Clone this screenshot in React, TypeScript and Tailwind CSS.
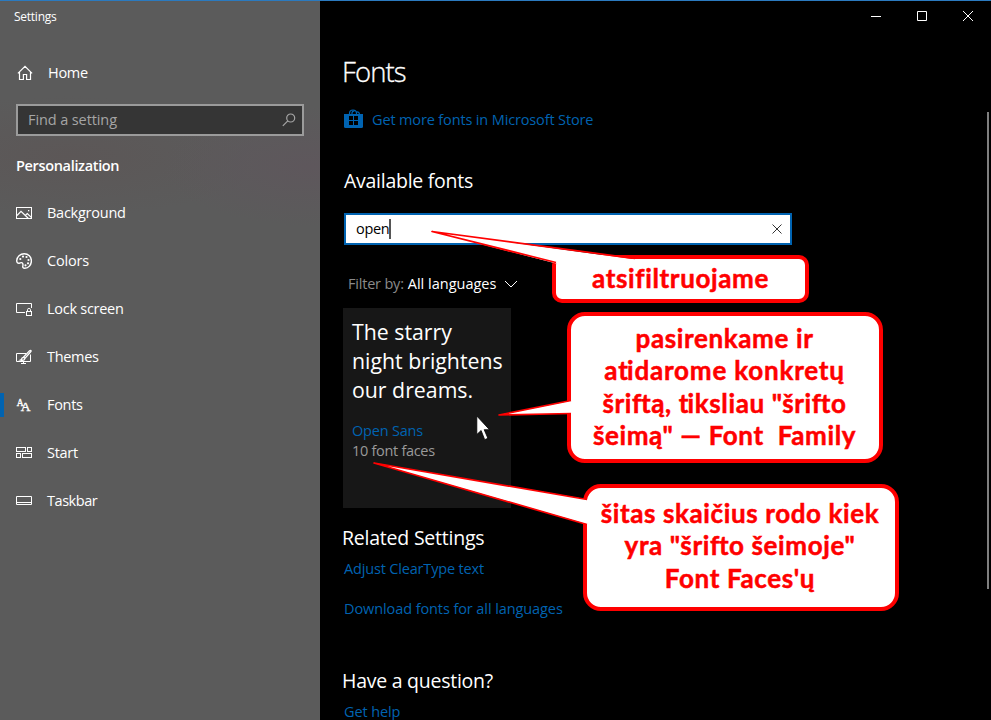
import type { ReactNode } from "react";

const stroke = { fill: "none", stroke: "currentColor", strokeWidth: 1 } as const;

function HomeIcon() {
  return (
    <svg width="16" height="16" viewBox="0 0 16 16" className="shrink-0">
      <path {...stroke} strokeWidth={1.2} d="M.9 8.4 8 1.3l7.1 7.1M2.5 7v7.5h3.9V9.5h3.2v5h3.9V7" />
    </svg>
  );
}

function PictureIcon() {
  return (
    <svg width="16" height="16" viewBox="0 0 16 16">
      <rect {...stroke} x=".5" y="2.5" width="15" height="11" />
      <path {...stroke} strokeWidth={1.2} d="m1 10.5 4-4.2 7.2 7M9.3 10.4l2-1.9 4 3.9" />
      <rect x="12" y="5" width="1.3" height="1.3" fill="currentColor" />
    </svg>
  );
}

function PaletteIcon() {
  return (
    <svg width="16" height="16" viewBox="0 0 16 16">
      <path {...stroke} strokeWidth={1.4} d="M.7 7.6C.9 3.6 4.2.7 8.2.7c4.1 0 7.2 3 7.2 7.1 0 4.200-3 7.500-6.600 7.500-1.700 0-2.300-1-2-2.300.3-1.500.3-2.700-.6-3.200-.9-.5-1.700.1-2.700.4C1.800 10.600.6 9.600.7 7.600Z" />
      <g fill="currentColor">
        <circle cx="4.300" cy="6" r="1.100" />
        <circle cx="7" cy="3.600" r="1.100" />
        <circle cx="10.500" cy="4" r="1.100" />
        <circle cx="12.500" cy="7" r="1.100" />
        <circle cx="12" cy="10.300" r="1.100" />
        <circle cx="9.500" cy="12.300" r="1.100" />
      </g>
    </svg>
  );
}

function LockScreenIcon() {
  return (
    <svg width="16" height="16" viewBox="0 0 16 16">
      <path {...stroke} d="M9 11.500H.5v-9h15V7" />
      <rect {...stroke} x="10.500" y="10.500" width="5" height="4" />
      <path {...stroke} d="M11.500 10.500V8.500q0-1 1.500-1t1.500 1v2" />
    </svg>
  );
}

function ThemesIcon() {
  return (
    <svg width="16" height="16" viewBox="0 0 16 16">
      <path {...stroke} d="M10 4.500H.5v8h14V5.500M7.500 12.500v2M5 14.500h5" />
      <path {...stroke} strokeWidth={1.300} d="m7.400 8.300 6-6.400q1-.9 1.500-.4t-.4 1.500L8.700 9.600M7.300 8.300q1.500.1 1.500 1.500-.5 2-4.300 1.200 1.100-.4 1.300-1.500.4-1.200 1.500-1.200Z" />
    </svg>
  );
}

function FontsIcon() {
  return (
    <svg width="16" height="16" viewBox="0 0 16 16" fill="currentColor" stroke="currentColor" strokeWidth=".35" className="font-['Liberation_Serif',serif]">
      <text x=".8" y="9.300" fontSize="9.500">A</text>
      <text x="4.800" y="13.500" fontSize="13.500">A</text>
    </svg>
  );
}

function StartIcon() {
  return (
    <svg width="16" height="16" viewBox="0 0 16 16" {...stroke}>
      <rect x=".5" y="2.500" width="9" height="4" />
      <rect x="11.500" y="2.500" width="4" height="4" />
      <rect x=".5" y="8.500" width="4" height="4" />
      <rect x="6.500" y="8.500" width="9" height="4" />
    </svg>
  );
}

function TaskbarIcon() {
  return (
    <svg width="16" height="16" viewBox="0 0 16 16" {...stroke}>
      <path d="M.5 3.500h15v8H.5zM.5 9.500h15" />
    </svg>
  );
}

function StoreIcon() {
  return (
    <svg width="19" height="20" viewBox="0 0 19 20" className="shrink-0 text-[#0063b1]">
      <path {...stroke} strokeWidth={1.200} d="M5.500 6V4.500Q5.500 1 9 1t3.500 3.500V6M8 5.500V4q0-2 2.500-2.200M12.500 3q3-.5 3 3" />
      <path fill="currentColor" d="M0 5h19v12.500q0 1.500-1.500 1.500h-16Q0 19 0 17.500z" />
      <path fill="#000" d="M5 7h4v4H5zM10 7h4v4h-4zM5 12h4v4H5zM10 12h4v4h-4z" />
    </svg>
  );
}

const items: { label: string; icon: ReactNode; track: string }[] = [
  { label: "Background", icon: <PictureIcon />, track: "tracking-[-0.25px]" },
  { label: "Colors", icon: <PaletteIcon />, track: "tracking-[-0.2px]" },
  { label: "Lock screen", icon: <LockScreenIcon />, track: "tracking-[-0.27px]" },
  { label: "Themes", icon: <ThemesIcon />, track: "tracking-[-0.3px]" },
  { label: "Fonts", icon: <FontsIcon />, track: "tracking-[-0.3px]" },
  { label: "Start", icon: <StartIcon />, track: "tracking-[-0.3px]" },
  { label: "Taskbar", icon: <TaskbarIcon />, track: "tracking-[-0.45px]" },
];

function Sidebar() {
  return (
    <aside className="flex w-[320px] shrink-0 flex-col bg-[#5b5b5b] bg-[radial-gradient(ellipse_150px_60px_at_310px_165px,#5e575c_0%,transparent_100%),radial-gradient(ellipse_200px_60px_at_70px_155px,#5c5757_0%,transparent_100%)] text-white">
      <div className="mt-[7px] h-[18px] pl-[14px] text-[12px] leading-[18px] tracking-[-0.25px]">Settings</div>
      <div className="mt-[37px] flex h-5 items-center gap-[15px] pl-[17px]">
        <HomeIcon />
        <span className="tracking-[-0.3px]">Home</span>
      </div>
      <div className="mx-4 mt-[21px] flex h-8 items-center justify-between border-2 border-[#9b9b9b] bg-[#353535] pr-[6px] pl-[10px] text-[#a5a5a5]">
        <span className="tracking-[-0.1px]">Find a setting</span>
        <svg width="14" height="14" viewBox="0 0 14 14">
          <circle {...stroke} strokeWidth={1.200} cx="8.700" cy="5" r="4" />
          <path {...stroke} strokeWidth={1.200} d="M5.800 7.800.8 12.800" />
        </svg>
      </div>
      <div className="mt-5 pl-4 font-semibold tracking-[-0.34px]">Personalization</div>
      <nav className="mt-[13px] flex flex-col">
        {items.map((it) => (
          <div key={it.label} className="flex h-12 items-center">
            <div className={it.label === "Fonts" ? "h-6 w-1 bg-[#0063b1]" : "h-6 w-1"} />
            <div className="ml-3 w-[31px] pb-px">{it.icon}</div>
            <span className={it.track}>{it.label}</span>
          </div>
        ))}
      </nav>
    </aside>
  );
}

function WindowButtons() {
  return (
    <div className="flex h-8 shrink-0 justify-end gap-9 pt-[10px] pr-[18px]">
      <svg width="10" height="10" viewBox="0 0 10 10" {...stroke}><path d="M0 5.500h10" /></svg>
      <svg width="10" height="10" viewBox="0 0 10 10" {...stroke}><path d="M.5.5h9v9h-9z" /></svg>
      <svg width="10" height="10" viewBox="0 0 10 10" {...stroke}><path d="m0 0 10 10M10 0 0 10" /></svg>
    </div>
  );
}

function Content() {
  return (
    <main className="flex min-w-0 flex-1 flex-col bg-black text-white">
      <WindowButtons />
      <div className="flex shrink-0 flex-col items-start pl-[23px]">
        <h1 className="mt-[21px] -ml-px text-[27.500px] leading-9 font-light tracking-[-0.9px] [-webkit-text-stroke:0.3px_#fff]">Fonts</h1>
        <div className="mt-[19px] ml-px flex h-5 items-center gap-[9px] text-[#0063b1]">
          <StoreIcon />
          <span className="pt-px tracking-[-0.14px]">Get more fonts in Microsoft Store</span>
        </div>
        <h2 className="mt-[38px] ml-px text-[19.500px] leading-7 tracking-[-0.27px]">Available fonts</h2>
        <div className="mt-[18px] ml-px flex h-8 w-[448px] items-center justify-between border-2 border-[#0063b1] bg-white pr-[8px] pl-[10px] text-black">
          <div className="flex items-center">
            <span className="tracking-[-0.3px]">open</span>
            <span className="h-5 w-[2px] bg-[#555]" />
          </div>
          <svg width="10" height="10" viewBox="0 0 10 10" className="text-[#333]" {...stroke}><path d="m.5.5 9 9M9.500.5l-9 9" /></svg>
        </div>
        <div className="mt-[29px] ml-[5px] flex h-5 items-center text-[14.500px]">
          <span className="tracking-[-0.2px] text-[#8a8a8a]">Filter by:</span>
          <span className="ml-1 tracking-[0px]">All languages</span>
          <svg width="14" height="8" viewBox="0 0 14 8" className="ml-2" {...stroke}><path d="m1 1 6 6 6-6" /></svg>
        </div>
        <section className="mt-[14px] flex h-[200px] w-[168px] flex-col bg-[#171717] pt-[9px] pl-[9px] whitespace-nowrap">
          <p className="text-[21.300px] leading-[29px]">
            The starry
            <br />
            night brightens
            <br />
            our dreams.
          </p>
          <p className="mt-[17px] tracking-[-0.2px] text-[#0063b1]">Open Sans</p>
          <p className="tracking-[-0.3px] text-[#9a9a9a]">10 font faces</p>
        </section>
        <h2 className="mt-[16px] -ml-px text-[19.500px] leading-7 tracking-[-0.22px]">Related Settings</h2>
        <a className="mt-[7px] ml-px tracking-[-0.17px] text-[#0063b1]">Adjust ClearType text</a>
        <a className="mt-5 ml-px tracking-[-0.09px] text-[#0063b1]">Download fonts for all languages</a>
        <h2 className="mt-[48px] -ml-px text-[19.500px] leading-7 tracking-[-0.25px]">Have a question?</h2>
        <a className="mt-[7px] ml-px tracking-[-0.12px] text-[#0063b1]">Get help</a>
      </div>
    </main>
  );
}

/* A "t" pulled against the following "i", as a ligature. */
function Ti() {
  return (
    <>
      <span className="tracking-[-0.900px]">t</span>i
    </>
  );
}

/* An "f" whose bar runs into the following "t". */
function Ft() {
  return (
    <>
      <span className="tracking-[-0.400px]">f</span>t
    </>
  );
}

function Callouts() {
  return (
    <div className="pointer-events-none absolute inset-0 font-['Lato',sans-serif] text-[26px] font-bold tracking-[0.62px] whitespace-nowrap text-[#ff0000] [-webkit-text-stroke:0.500px_#ff0000]">
      <div className="absolute top-[255px] left-[552px] flex h-[48px] w-[257px] items-center justify-center rounded-[10px] border-4 border-[#ff0000] bg-white pb-[3px]">
        <span>atsifiltruojame</span>
      </div>
      <div className="absolute top-[312px] left-[566.500px] flex h-[151px] w-[316px] flex-col items-center justify-center rounded-[18px] border-4 border-[#ff0000] bg-white pb-[2px] leading-[32.400px]">
        <span>pasirenkame ir</span>
        <span className="tracking-[0.800px]">a<Ti />darome konkretų</span>
        <span>šri<Ft />ą, <Ti />ksliau "šri<Ft />o</span>
        <span className="whitespace-pre">šeimą" — Font  Family</span>
      </div>
      <div className="absolute top-[484px] left-[583px] flex h-[127px] w-[316px] flex-col items-center justify-center rounded-[18px] border-4 border-[#ff0000] bg-white pr-[2px] pb-[4px] leading-[32.400px]">
        <span>šitas skaičius rodo kiek</span>
        <span>yra "šri<Ft />o šeimoje"</span>
        <span>Font Faces'ų</span>
      </div>
      <svg className="absolute inset-0" width="991" height="720" viewBox="0 0 991 720">
        <g fill="#fff">
          <path d="M432 231.500 635 259.500 556 263.500z" />
          <path d="M499 415 572 400.500V413.500z" />
          <path d="M374 463 588 499.500V524.500z" />
        </g>
        <g fill="none" stroke="#f00" strokeWidth="1.700" strokeLinejoin="round">
          <path d="M556 262.500 432 231.500 635 258.500" />
          <path d="M571 413.500 499 415 571 400.500" />
          <path d="M587 524.500 374 463 587 499.500" />
        </g>
      </svg>
      <svg className="absolute top-[415px] left-[476px]" width="14" height="26" viewBox="0 0 14 26">
        <path d="M.8 1v18.500l4.300-4 3.600 9.200 3.200-1.400-3.700-8.600h5.300z" fill="#fff" stroke="#000" strokeWidth=".8" />
      </svg>
    </div>
  );
}

export default function App() {
  return (
    <div className="relative flex h-[720px] w-[991px] overflow-hidden border-t border-[#2b7abf] bg-black font-['Open_Sans','Noto_Sans',sans-serif] text-[14.500px] leading-5">
      <Sidebar />
      <Content />
      <div className="absolute top-[111px] left-[987px] h-[477px] w-[2px] bg-[#7f7f7f]" />
      <div className="absolute inset-x-0 -top-px h-[720px]">
        <Callouts />
      </div>
    </div>
  );
}
